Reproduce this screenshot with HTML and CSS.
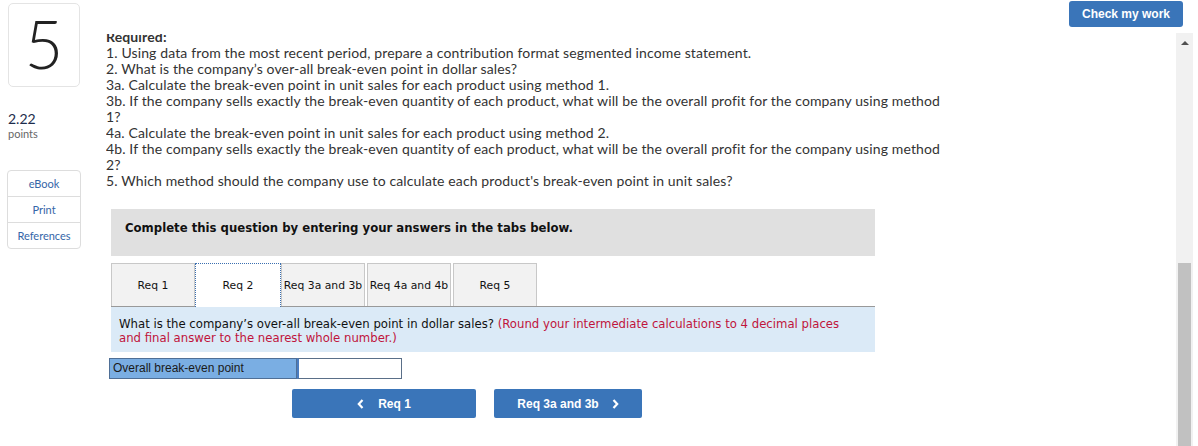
FILE: index.html
```html
<!DOCTYPE html>
<html>
<head>
<meta charset="utf-8">
<link rel="stylesheet" href="styles.css">
</head>
<body>
<div class="page">
  <aside class="left">
    <div class="qnum">5</div>
    <div class="pts">
      <div class="pts-val">2.22</div>
      <div class="pts-lbl">points</div>
    </div>
    <div class="tools">
      <div class="tool">eBook</div>
      <div class="tool">Print</div>
      <div class="tool">References</div>
    </div>
  </aside>
  <main class="main">
    <div class="reqwrap">
      <div class="req">
        <div class="req-title">Required:</div>
        <div>1. Using data from the most recent period, prepare a contribution format segmented income statement.</div>
        <div>2. What is the company’s over-all break-even point in dollar sales?</div>
        <div>3a. Calculate the break-even point in unit sales for each product using method 1.</div>
        <div>3b. If the company sells exactly the break-even quantity of each product, what will be the overall profit for the company using method 1?</div>
        <div>4a. Calculate the break-even point in unit sales for each product using method 2.</div>
        <div>4b. If the company sells exactly the break-even quantity of each product, what will be the overall profit for the company using method 2?</div>
        <div>5. Which method should the company use to calculate each product's break-even point in unit sales?</div>
      </div>
    </div>
    <div class="quiz">
      <div class="banner">Complete this question by entering your answers in the tabs below.</div>
      <div class="tabs">
        <div class="tab">Req 1</div>
        <div class="tab active">Req 2</div>
        <div class="tab">Req 3a and 3b</div>
        <div class="tab">Req 4a and 4b</div>
        <div class="tab">Req 5</div>
      </div>
      <div class="prompt">What is the company’s over-all break-even point in dollar sales? <span class="hint">(Round your intermediate calculations to 4 decimal places and final answer to the nearest whole number.)</span></div>
      <div class="answer">
        <div class="ans-label">Overall break-even point</div>
        <div class="ans-input"></div>
      </div>
      <div class="nav">
        <div class="nav-btn prev"><svg class="chev" width="7" height="10" viewBox="0 0 7 10"><path d="M5.5 1 L1.8 5 L5.5 9" fill="none" stroke="#fff" stroke-width="2.2"/></svg>Req 1</div>
        <div class="nav-btn next">Req 3a and 3b<svg class="chev" width="7" height="10" viewBox="0 0 7 10"><path d="M1.5 1 L5.2 5 L1.5 9" fill="none" stroke="#fff" stroke-width="2.2"/></svg></div>
      </div>
    </div>
  </main>
  <div class="right">
    <div class="check">Check my work</div>
    <div class="scrollbar">
      <div class="arrow"></div>
      <div class="thumb"></div>
    </div>
  </div>
</div>
</body>
</html>
```

FILE: styles.css
```css
html, body {
  margin: 0;
  padding: 0;
  background: #fff;
}
body {
  font-family: Lato, "Open Sans", sans-serif;
  color: #333;
  overflow: hidden;
}
.page {
  display: flex;
  height: 446px;
}
.left {
  width: 98px;
  padding-left: 8px;
  flex: none;
}
.qnum {
  box-sizing: border-box;
  width: 72px;
  height: 84px;
  margin-top: 3px;
  border: 1px solid #e4e4e4;
  border-radius: 5px;
  display: flex;
  justify-content: center;
  align-items: center;
  font-family: Lato, sans-serif;
  font-weight: 300;
  font-size: 67px;
  line-height: 1;
  color: #222;
  padding-bottom: 4px;
}
.pts {
  margin-top: 24px;
}
.pts-val {
  font-size: 14px;
  line-height: 16px;
  color: #1d2c4c;
}
.pts-lbl {
  font-size: 11px;
  line-height: 14px;
  color: #666;
}
.tools {
  margin-top: 29px;
  margin-left: -1px;
  width: 74px;
  box-sizing: border-box;
  border: 1px solid #ddd;
  border-radius: 4px;
}
.tool {
  height: 25px;
  display: flex;
  align-items: center;
  justify-content: center;
  font-size: 11px;
  color: #3566a8;
  border-top: 1px solid #ddd;
}
.tool:first-child {
  border-top: none;
}
.main {
  width: 842px;
  flex: none;
  padding-top: 34px;
}
.reqwrap {
  overflow: hidden;
}
.req {
  margin-top: -5px;
  font-size: 14px;
  letter-spacing: 0.13px;
  line-height: 16px;
  color: #333;
}
.req-title {
  font-weight: bold;
}
.quiz {
  margin-top: 20px;
  margin-left: 5px;
  width: 764px;
  font-family: "DejaVu Sans", Verdana, sans-serif;
}
.banner {
  background: #e0e0e0;
  height: 47px;
  box-sizing: border-box;
  padding: 12px 14px 0;
  font-size: 11.7px;
  line-height: 14px;
  font-weight: bold;
  color: #111;
}
.tabs {
  display: flex;
  margin-top: 7px;
  border-bottom: 1px solid #999;
  height: 43px;
}
.tab {
  box-sizing: border-box;
  width: 84px;
  height: 43px;
  margin-right: 2px;
  background: #f2f2f2;
  border: 1px solid #c8c8c8;
  border-bottom: none;
  display: flex;
  align-items: center;
  justify-content: center;
  font-size: 10.8px;
  color: #111;
  white-space: nowrap;
}
.tab.active {
  background: #fff;
  border: 1px dotted #3a6fb0;
  border-bottom: none;
  height: 44px;
  padding-bottom: 1px;
  margin-left: -2px;
  width: 86px;
  margin-right: 0;
}
.prompt {
  background: #dbeaf7;
  padding: 10px 20px 7px 8px;
  font-size: 11.7px;
  line-height: 14px;
  color: #111;
}
.hint {
  color: #c0143c;
}
.answer {
  display: flex;
  margin-top: 6px;
  margin-left: -2px;
  height: 21px;
}
.ans-label {
  box-sizing: border-box;
  width: 188px;
  background: #7aaee3;
  border: 1px solid #4f6f96;
  font-family: Arial, "Liberation Sans", sans-serif;
  font-size: 12px;
  line-height: 19px;
  padding-left: 3px;
  color: #1a1a1a;
}
.ans-input {
  box-sizing: border-box;
  width: 105px;
  background: #fff;
  border: 1px solid #5a6f88;
  border-left: 2px solid #4a7cc0;
}
.nav {
  display: flex;
  margin-top: 10px;
  margin-left: 181px;
  gap: 18px;
}
.nav-btn {
  height: 29px;
  background: #3a75b9;
  border-radius: 2px;
  color: #fff;
  font-family: Arial, "Liberation Sans", sans-serif;
  font-weight: bold;
  font-size: 12px;
  display: flex;
  align-items: center;
  justify-content: center;
}
.nav-btn.prev {
  width: 184px;
}
.nav-btn.next {
  width: 148px;
}
.chev {
  display: block;
}
.prev .chev {
  margin-right: 14px;
}
.next .chev {
  margin-left: 13px;
}
.right {
  flex: 1;
  display: flex;
  flex-direction: column;
  align-items: flex-end;
}
.check {
  margin-top: 1px;
  margin-right: 15px;
  width: 114px;
  height: 26px;
  background: #3a75b9;
  border-radius: 3px;
  color: #fff;
  font-family: Arial, "Liberation Sans", sans-serif;
  font-weight: bold;
  font-size: 12px;
  display: flex;
  align-items: center;
  justify-content: center;
}
.scrollbar {
  margin-top: 6px;
  margin-right: 5px;
  width: 17px;
  flex: 1;
  background: #f1f1f1;
  display: flex;
  flex-direction: column;
  align-items: center;
}
.arrow {
  margin-top: 8px;
  width: 0;
  height: 0;
  border-left: 4px solid transparent;
  border-right: 4px solid transparent;
  border-bottom: 4px solid #505050;
}
.thumb {
  margin-top: 218px;
  width: 13px;
  flex: 1;
  background: #c1c1c1;
}
```
